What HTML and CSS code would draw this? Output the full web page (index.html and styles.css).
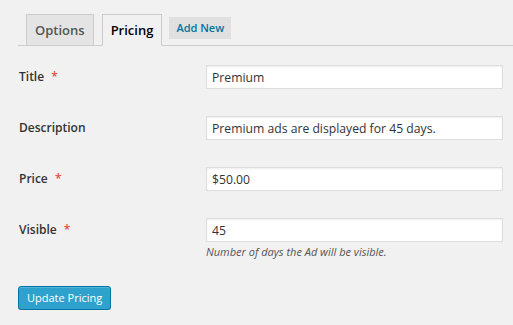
FILE: index.html
```html
<!DOCTYPE html>
<html lang="en">
<head>
   <meta charset="UTF-8">
   <title>Pricing</title>
   <link rel="stylesheet" href="styles.css">
</head>
<body>
<main class="wrap">
   <nav class="nav-tabs">
      <a class="nav-tab">Options</a>
      <a class="nav-tab active">Pricing</a>
      <a class="add-new">Add New</a>
   </nav>

   <form class="form-table">
      <div class="row">
         <label>Title <span class="req">*</span></label>
         <div class="field"><input type="text" value="Premium"></div>
      </div>
      <div class="row">
         <label>Description</label>
         <div class="field"><input type="text" value="Premium ads are displayed for 45 days."></div>
      </div>
      <div class="row">
         <label>Price <span class="req">*</span></label>
         <div class="field"><input type="text" value="$50.00"></div>
      </div>
      <div class="row">
         <label>Visible <span class="req">*</span></label>
         <div class="field">
            <input type="text" value="45">
            <p class="description">Number of days the Ad will be visible.</p>
         </div>
      </div>
      <button type="button" class="button-primary">Update Pricing</button>
   </form>
</main>
</body>
</html>
```

FILE: styles.css
```css
body {
   font-family: "Open Sans", sans-serif;
   margin: 0;
   padding: 0;
   background-color: #f1f1f1;
   color: #444;
}
.wrap {
   padding: 14px 0 0 18px;
}
.nav-tabs {
   display: flex;
   align-items: flex-start;
   border-bottom: 1px solid #ccc;
   padding-left: 8px;
}
.nav-tab {
   font-size: 13px;
   font-weight: 600;
   line-height: 19px;
   padding: 6px 8px 5px;
   border: 1px solid #ccc;
   border-bottom: none;
   background-color: #e4e4e4;
   color: #555;
   margin-right: 8px;
   margin-bottom: -1px;
}
.nav-tab.active {
   background-color: #f1f1f1;
   color: #000;
   border-bottom: 1px solid #f1f1f1;
}
.add-new {
   margin-top: 3px;
   margin-left: -1px;
   font-size: 11px;
   font-weight: 600;
   line-height: 22px;
   padding: 0 7px;
   background-color: #e0e0e0;
   color: #0074a2;
}
.form-table {
   padding-top: 19px;
}
.row {
   display: flex;
   align-items: flex-start;
   margin-bottom: 27px;
}
.row label {
   width: 187px;
   padding-left: 1px;
   font-size: 12px;
   font-weight: 600;
   line-height: 24px;
   color: #333;
}
.req {
   color: #e14d43;
   margin-left: 4px;
}
.field {
   width: 297px;
}
input {
   display: block;
   width: 100%;
   box-sizing: border-box;
   height: 24px;
   padding: 2px 5px;
   border: 1px solid #ddd;
   box-shadow: inset 0 1px 2px rgba(0, 0, 0, 0.07);
   font-family: inherit;
   font-size: 12.2px;
   color: #333;
   background: #fff;
}
.description {
   margin: 2px 0 0;
   font-size: 11px;
   font-style: italic;
   color: #555;
}
.row:last-of-type {
   margin-bottom: 26px;
}
.button-primary {
   font-family: inherit;
   font-size: 11px;
   line-height: 22px;
   height: 24px;
   padding: 0 8px;
   background-color: #2ea2cc;
   border: 1px solid #0074a2;
   border-radius: 3px;
   box-shadow: inset 0 1px 0 rgba(120, 200, 230, 0.5), 0 1px 0 rgba(0, 0, 0, 0.15);
   color: #fff;
   cursor: pointer;
}
```
